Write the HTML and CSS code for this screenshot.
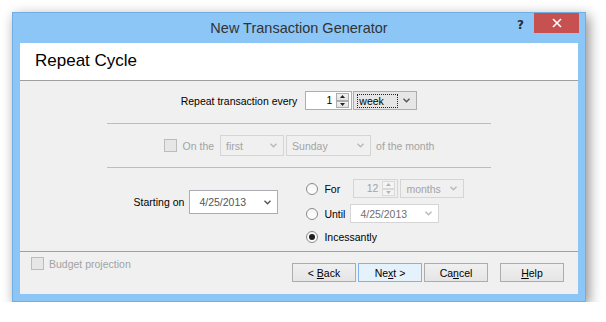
FILE: index.html
```html
<!DOCTYPE html>
<html lang="en">
<head>
    <meta charset="UTF-8">
    <title>New Transaction Generator</title>
    <link rel="stylesheet" href="styles.css">
</head>
<body>
    <div class="window">
        <div class="titlebar">
            <div></div>
            <div class="title">New Transaction Generator</div>
            <div class="caption-buttons">
                <span class="help-btn">?</span>
                <span class="close-btn">
                    <svg width="10" height="10" viewBox="0 0 10 10"><path d="M1 1 L9 9 M9 1 L1 9" stroke="#fff" stroke-width="1.6"/></svg>
                </span>
            </div>
        </div>

        <div class="client">
            <div class="header">Repeat Cycle</div>

            <div class="body">
                <div class="row row-every">
                    <span class="label">Repeat transaction every</span>
                    <div class="spin">
                        <span class="val">1</span>
                        <div class="arrows">
                            <span><svg width="5" height="3" viewBox="0 0 5 3"><path d="M0 3 L2.5 0 L5 3Z" fill="#222"/></svg></span>
                            <span><svg width="5" height="3" viewBox="0 0 5 3"><path d="M0 0 L2.5 3 L5 0Z" fill="#222"/></svg></span>
                        </div>
                    </div>
                    <div class="combo combo-week">
                        <span class="txt focus">week</span>
                        <svg class="chev" width="7" height="5" viewBox="0 0 7 5"><path d="M0.5 0.8 L3.5 3.8 L6.5 0.8" fill="none" stroke="currentColor" stroke-width="1.4"/></svg>
                    </div>
                </div>

                <div class="sep"></div>

                <div class="row row-onthe disabled">
                    <span class="check"></span>
                    <span class="label on-the">On the</span>
                    <div class="combo combo-first">
                        <span class="txt">first</span>
                        <svg class="chev" width="7" height="5" viewBox="0 0 7 5"><path d="M0.5 0.8 L3.5 3.8 L6.5 0.8" fill="none" stroke="currentColor" stroke-width="1.4"/></svg>
                    </div>
                    <div class="combo combo-day">
                        <span class="txt">Sunday</span>
                        <svg class="chev" width="7" height="5" viewBox="0 0 7 5"><path d="M0.5 0.8 L3.5 3.8 L6.5 0.8" fill="none" stroke="currentColor" stroke-width="1.4"/></svg>
                    </div>
                    <span class="label of-month">of the month</span>
                </div>

                <div class="sep"></div>

                <div class="row row-start">
                    <div class="start">
                        <span class="label">Starting on</span>
                        <div class="date date-start">
                            <span class="txt">4/25/2013</span>
                            <svg class="chev" width="7" height="5" viewBox="0 0 7 5"><path d="M0.5 0.8 L3.5 3.8 L6.5 0.8" fill="none" stroke="currentColor" stroke-width="1.4"/></svg>
                        </div>
                    </div>

                    <div class="radios">
                        <div class="radio-row">
                            <span class="radio"></span>
                            <span class="label lbl-for">For</span>
                            <div class="spin spin-off">
                                <span class="val">12</span>
                                <div class="arrows">
                                    <span><svg width="5" height="3" viewBox="0 0 5 3"><path d="M0 3 L2.5 0 L5 3Z" fill="#b5b5b5"/></svg></span>
                                    <span><svg width="5" height="3" viewBox="0 0 5 3"><path d="M0 0 L2.5 3 L5 0Z" fill="#b5b5b5"/></svg></span>
                                </div>
                            </div>
                            <div class="combo combo-months off">
                                <span class="txt">months</span>
                                <svg class="chev" width="7" height="5" viewBox="0 0 7 5"><path d="M0.5 0.8 L3.5 3.8 L6.5 0.8" fill="none" stroke="currentColor" stroke-width="1.4"/></svg>
                            </div>
                        </div>
                        <div class="radio-row">
                            <span class="radio"></span>
                            <span class="label lbl-until">Until</span>
                            <div class="date date-until">
                                <span class="txt">4/25/2013</span>
                                <svg class="chev" width="7" height="5" viewBox="0 0 7 5"><path d="M0.5 0.8 L3.5 3.8 L6.5 0.8" fill="none" stroke="currentColor" stroke-width="1.4"/></svg>
                            </div>
                        </div>
                        <div class="radio-row radio-last">
                            <span class="radio checked"></span>
                            <span class="label">Incessantly</span>
                        </div>
                    </div>
                </div>
            </div>

            <div class="footer">
                <div class="budget disabled">
                    <span class="check"></span>
                    <span class="label">Budget projection</span>
                </div>
                <div class="buttons">
                    <button class="btn">&lt; <u>B</u>ack</button>
                    <button class="btn default">Ne<u>x</u>t &gt;</button>
                    <button class="btn">Ca<u>n</u>cel</button>
                    <button class="btn help"><u>H</u>elp</button>
                </div>
            </div>
        </div>
    </div>
</body>
</html>
```

FILE: styles.css
```css
body {
    margin: 0;
    background-color: #fff;
    font-family: "Liberation Sans", Arial, sans-serif;
    font-size: 10.5px;
    color: #000;
}

.window {
    margin: 12px 0 0 12px;
    width: 574px;
    height: 290px;
    box-sizing: border-box;
    background-color: #8bc6f7;
    border: 1px solid #74ade2;
    box-shadow: 3px 4px 12px rgba(0,0,0,0.45);
    display: flex;
    flex-direction: column;
}

.titlebar {
    height: 30px;
    display: grid;
    grid-template-columns: 1fr auto 1fr;
    flex-shrink: 0;
}

.title {
    font-size: 14.5px;
    line-height: 30px;
    color: #333;
}

.caption-buttons {
    display: flex;
    justify-content: flex-end;
    align-items: flex-start;
}

.help-btn {
    font-family: "DejaVu Sans", sans-serif;
    font-weight: bold;
    font-size: 12px;
    color: #2b2b2b;
    margin: 5px 10px 0 0;
}

.close-btn {
    width: 45px;
    height: 20px;
    margin-right: 6px;
    background-color: #c75050;
    display: flex;
    align-items: center;
    justify-content: center;
}

.client {
    flex: 1;
    margin: 0 7px 7px;
    background-color: #f0f0f0;
    display: flex;
    flex-direction: column;
}

.header {
    height: 38px;
    box-sizing: border-box;
    background-color: #fff;
    border-bottom: 1px solid #a0a0a0;
    font-size: 17px;
    line-height: 36px;
    padding-left: 15px;
}

.body {
    height: 170px;
    box-sizing: border-box;
    padding-top: 10px;
    display: flex;
    flex-direction: column;
}

.row {
    display: flex;
    justify-content: center;
    align-items: center;
}

.row-every {
    height: 19px;
}

.row-every .label {
    margin-right: 8px;
}

.sep {
    width: 384px;
    align-self: center;
    border-top: 1px solid #bdbdbd;
    margin-top: 13px;
}

.row-onthe {
    height: 21px;
    margin-top: 11px;
}

.row-onthe + .sep {
    margin-top: 11px;
}

.row-start {
    margin-top: 11px;
    align-items: flex-start;
}

.disabled .label {
    color: #a3a3a3;
}

/* spin box */
.spin {
    display: flex;
    width: 47px;
    height: 19px;
    box-sizing: border-box;
    border: 1px solid #abadb3;
    background-color: #fff;
}

.spin .val {
    flex: 1;
    text-align: right;
    padding-right: 4px;
    line-height: 17px;
}

.spin .arrows {
    width: 13px;
    padding: 1px 2px 1px 0;
    display: flex;
    flex-direction: column;
}

.spin .arrows span {
    flex: 1;
    border: 1px solid #adadad;
    background: linear-gradient(#f2f2f2, #e2e2e2);
    display: flex;
    align-items: center;
    justify-content: center;
}

.spin-off {
    width: 45px;
    border-color: #d5d5d5;
    background-color: #f0f0f0;
    color: #a3a3a3;
}

.spin-off .arrows span {
    border-color: #d9d9d9;
    background: #f4f4f4;
}

/* combo box */
.combo {
    display: flex;
    align-items: center;
    box-sizing: border-box;
    height: 19px;
    border: 1px solid #adadad;
    background-color: #e6e6e6;
    padding: 0 6px 0 3px;
    color: #555;
}

.combo .txt {
    flex: 1;
    color: #000;
}

.combo .focus {
    flex: 0 0 38px;
    margin-right: auto;
    border: 1px dotted #222;
    line-height: 12px;
    padding-left: 1px;
}

.combo-week {
    width: 64px;
    margin-left: 1px;
}

.row-onthe .combo,
.combo.off {
    border-color: #d5d5d5;
    background-color: #f0f0f0;
    color: #b8b8b8;
    height: 21px;
}

.row-onthe .combo .txt,
.combo.off .txt {
    color: #a3a3a3;
    padding-left: 2px;
}

.combo-first {
    width: 64px;
}

.combo-day {
    width: 85px;
    margin-left: 2px;
}

.check {
    width: 11px;
    height: 11px;
    border: 1px solid #bcbcbc;
    background-color: #e6e6e6;
}

.on-the {
    margin: 0 6px 0 6px;
}

.of-month {
    margin-left: 5px;
}

/* date picker */
.start {
    display: flex;
    align-items: center;
    margin-top: 11px;
}

.start .label {
    margin-right: 5px;
}

.date {
    display: flex;
    align-items: center;
    box-sizing: border-box;
    width: 89px;
    border: 1px solid #abadb3;
    background-color: #fff;
    padding: 0 6px 0 9px;
    color: #555;
}

.date .txt {
    flex: 1;
}

.date-start {
    height: 24px;
}

.date-until {
    height: 19px;
    border-color: #d5d5d5;
    color: #b8b8b8;
}

.date-until .txt {
    color: #707070;
}

/* radio group */
.radios {
    margin-left: 28px;
    display: flex;
    flex-direction: column;
    gap: 6px;
}

.radio-row {
    display: flex;
    align-items: center;
    height: 19px;
}

.radio-last {
    height: 14px;
    margin-top: 1px;
}

.radio {
    width: 10px;
    height: 10px;
    border: 1px solid #8a8a8a;
    border-radius: 50%;
    background: linear-gradient(#f4f4f4, #fff);
    display: flex;
    align-items: center;
    justify-content: center;
    margin-right: 6px;
}

.radio.checked::after {
    content: "";
    width: 6px;
    height: 6px;
    border-radius: 50%;
    background-color: #1e1e1e;
}

.lbl-for {
    width: 29px;
}

.lbl-until {
    width: 26px;
}

.combo-months {
    width: 64px;
    height: 19px !important;
    margin-left: 2px;
}

/* footer */
.footer {
    height: 42px;
    box-sizing: border-box;
    border-top: 1px solid #a0a0a0;
    display: flex;
    align-items: flex-start;
    padding: 0 14px 0 11px;
}

.budget {
    display: flex;
    align-items: center;
    margin-top: 5px;
}

.budget .label {
    margin-left: 5px;
}

.buttons {
    margin-left: auto;
    margin-top: 11px;
    display: flex;
    gap: 2px;
}

.btn {
    width: 64px;
    height: 19px;
    padding: 0;
    font-family: inherit;
    font-size: 10.5px;
    color: #000;
    background: linear-gradient(#f0f0f0, #e5e5e5);
    border: 1px solid #acacac;
}

.btn.default {
    background: #e5f1fb;
    border-color: #7eb4ea;
}

.btn.help {
    margin-left: 10px;
}
```
